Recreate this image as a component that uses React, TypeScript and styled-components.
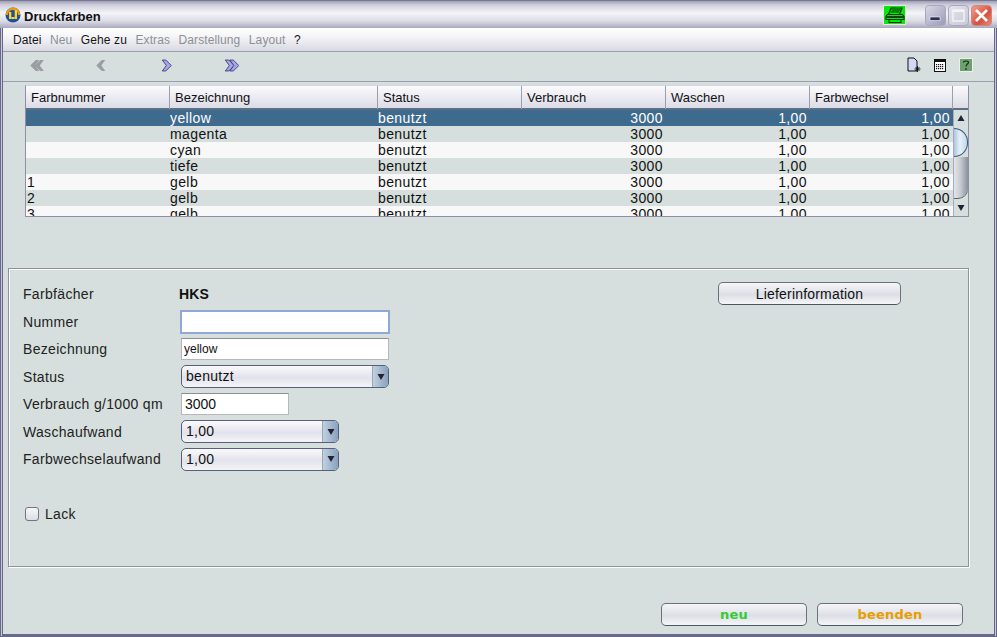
import React from "react";
import styled, { createGlobalStyle } from "styled-components";

const Global = createGlobalStyle`
  html, body { margin: 0; padding: 0; background: #d6dfdd; }
  body { font-family: "Liberation Sans", Arial, sans-serif; color: #111; overflow: hidden; }
  * { box-sizing: border-box; }
`;

const Window = styled.div`
  width: 997px; height: 637px; display: flex; flex-direction: column;
  background: #d6dfdd; overflow: hidden;
`;
const TitleBar = styled.div`
  height: 28px; flex: none; display: flex; align-items: center; padding: 1px 5px 0 5px;
  border-top: 1px solid #77778f;
  background: linear-gradient(#9f9fb6 0, #cfcfdc 4px, #f4f4f8 12px, #dcdce6 20px, #a9a9bf 27px);
`;
const Title = styled.span`
  font: bold 13px "Liberation Sans", Arial, sans-serif; margin: 2px 0 0 3px; color: #111; flex: 1;
`;
const PrintButton = styled.div`
  width: 23px; height: 20px; margin-right: 19px; background: #08e808; border: 1px solid #e8e8e8;
  display: flex; align-items: center; justify-content: center;
`;
const WinButton = styled.div<{ $kind: "min" | "max" | "close" }>`
  width: 21px; height: 21px; border-radius: 4px; margin-left: ${p => (p.$kind === "min" ? 0 : 2)}px;
  display: flex; align-items: center; justify-content: center;
  border: 1px solid ${p => (p.$kind === "close" ? "#c98a80" : "#a8a8bc")};
  background: ${p =>
    p.$kind === "close"
      ? "linear-gradient(135deg,#f0a090,#d8503c 60%,#e88a70)"
      : p.$kind === "min"
      ? "linear-gradient(135deg,#d8d8e6,#9a9ab8)"
      : "linear-gradient(135deg,#e4e4ec,#c8c8d8)"};
`;
const Frame = styled.div`
  flex: 1; min-height: 0; display: flex; flex-direction: column;
  border: 1px solid #68688a; border-width: 0 1px 1px 1px;
  box-shadow: inset 1px 0 0 #c8c8d8, inset -1px 0 0 #c8c8d8, inset 2px 0 0 #68688a, inset -2px 0 0 #68688a, inset 0 -2px 0 #68688a;
  padding: 0 3px 3px 3px;
  margin: 0;
`;
const MenuBar = styled.div`
  height: 24px; flex: none; display: flex; align-items: center; gap: 8.5px; padding: 0 0 0 10px;
  border-bottom: 1px solid #9a9fae; margin: 0 -1px;
  background: linear-gradient(#ffffff, #f4f4f7 40%, #d8d8e2);
`;
const MenuItem = styled.span<{ $off?: boolean }>`
  font-size: 12px; letter-spacing: 0.1px; color: ${p => (p.$off ? "#8c9094" : "#151515")}; white-space: nowrap;
`;
const ToolBar = styled.div`
  height: 30px; flex: none; display: flex; align-items: center; padding: 0 21px 3px 27px;
  border-bottom: 1px solid #9a9fae; margin: 0 -1px;
`;
const NavSlot = styled.div<{ $w: number }>`
  width: ${p => p.$w}px; display: flex;
`;
const ToolSpacer = styled.div`flex: 1;`;
const ToolIcon = styled.div<{ $w: number }>`
  width: ${p => p.$w}px; height: 16px; margin-left: 13px; display: flex; align-items: center; justify-content: center;
`;

const Table = styled.div`
  margin: 3px 0 0 21px; width: 944px; height: 132px; flex: none;
  border: 1px solid #8e8ea6; display: flex; flex-direction: column; overflow: hidden; background: #d6dfdd;
  border-top-color: #d4d4e0;
`;
const HeaderRow = styled.div`
  height: 24px; flex: none; display: grid; grid-template-columns: 144px 208px 144px 144px 144px 143px 1fr;
  border-bottom: 2px solid #5d6f82;
  background: linear-gradient(#fbfbfd, #ebebf2 50%, #dcdce8);
`;
const HeaderCell = styled.div`
  font-size: 13px; line-height: 23px; padding-left: 5px; border-right: 1px solid #9a9fa8;
  &:last-child { border-right: 0; }
`;
const TableBody = styled.div`
  flex: 1; min-height: 0; display: flex;
`;
const Rows = styled.div`
  width: 927px; overflow: hidden;
`;
const Row = styled.div<{ $sel?: boolean; $alt?: boolean }>`
  height: 16px; display: grid; grid-template-columns: 144px 208px 144px 144px 144px 143px;
  background: ${p => (p.$sel ? "#3e6a8e" : p.$alt ? "#d6dfdd" : "#f8f8f8")};
  color: ${p => (p.$sel ? "#fff" : "#111")};
`;
const Cell = styled.div<{ $right?: boolean }>`
  font-size: 14px; line-height: 16px; white-space: nowrap; overflow: hidden; letter-spacing: 0.4px;
  text-align: ${p => (p.$right ? "right" : "left")};
  padding: ${p => (p.$right ? "0 3px 0 0" : "0")};
  &:first-child { padding-left: 1px; }
`;
const ScrollBar = styled.div`
  flex: 1; display: flex; flex-direction: column; border-left: 1px solid #aab; background: #d6dfdd;
`;
const ScrollArrow = styled.div`
  height: 16px; flex: none; display: flex; align-items: center; justify-content: center; background: #d6dfdd;
  &:last-child { margin-top: auto; }
`;
const ScrollThumb = styled.div`
  height: 29px; margin-top: 2px; flex: none; border: 1px solid #3c5a78; border-left: 0;
  border-radius: 0 14px 14px 0; background: linear-gradient(90deg, #a9c6e2, #e8f0f8 45%, #c4d8ec);
`;
const ScrollTrack = styled.div`
  height: 42px; flex: none; border-radius: 0 0 10px 0;
  background: linear-gradient(90deg, #e2e4e8, #c8ccd2 45%, #8b909c);
  border-bottom: 1px solid #5c6270;
`;

const Panel = styled.div`
  margin: 51px 0 0 4px; width: 961px; height: 299px; flex: none;
  border: 1px solid #8f9296; box-shadow: 1px 1px 0 #fff, inset 1px 1px 0 #fff;
  padding: 11px 67px 0 14px; display: flex; justify-content: space-between; align-items: flex-start;
`;
const FormColumn = styled.div`display: flex; flex-direction: column;`;
const FormGrid = styled.div`
  display: grid; grid-template-columns: 158px auto;
  grid-template-rows: 28px 27px 28px 27px 28px 27px 28px; align-items: center; justify-items: start;
`;
const Label = styled.label`font-size: 14px; color: #222; white-space: nowrap; letter-spacing: 0.32px;`;
const Strong = styled.span`font-size: 14px; font-weight: bold; color: #111; margin-left: -2px; letter-spacing: 0.2px;`;
const Input = styled.div<{ $w: number; $focus?: boolean; $small?: boolean }>`
  width: ${p => p.$w}px; height: ${p => (p.$focus ? 24 : 22)}px; background: #fff;
  margin-left: ${p => (p.$focus ? -1 : 0)}px;
  border: ${p => (p.$focus ? "2px solid #8fa8d4" : "1px solid #b4b8bc")};
  border-top-color: ${p => (p.$focus ? "#8fa8d4" : "#8c8f92")};
  font-size: ${p => (p.$small ? 12 : 14)}px; line-height: 20px; padding: 0 0 0 ${p => (p.$small ? 2 : 3)}px; color: #111;
`;
const Select = styled.div<{ $w: number }>`
  width: ${p => p.$w}px; height: 23px; border: 1px solid #56607a; border-radius: 5px; overflow: hidden;
  display: flex; background: linear-gradient(#fafafc, #e2e2ec 55%, #f4f4f8);
`;
const SelectValue = styled.span`
  flex: 1; font-size: 14px; line-height: 21px; padding-left: 4px; color: #111; letter-spacing: 0.3px;
`;
const SelectArrow = styled.span`
  width: 16px; display: flex; align-items: center; justify-content: center;
  border-left: 1px solid #9aa; background: linear-gradient(90deg, #c0d0e2, #88a2bc);
`;
const CheckRow = styled.div`
  margin: 34px 0 0 2px; display: flex; align-items: center; gap: 6px; height: 14px;
`;
const CheckBox = styled.span`
  width: 14px; height: 14px; border: 1px solid #70767e; border-radius: 3px;
  background: linear-gradient(#f8f8fa, #dcdce6);
`;
const PushButton = styled.button`
  height: 23px; border: 1px solid #6c7078; border-radius: 5px; padding: 0; font-family: inherit;
  background: linear-gradient(#f6f6f9, #dcdfe6 55%, #f4f5f8); border-bottom-color: #50555e;
`;
const InfoButton = styled(PushButton)`
  width: 183px; font-size: 14px; color: #111; margin-top: 2px; letter-spacing: 0.2px;
`;
const Footer = styled.div`
  margin-top: 36px; display: flex; justify-content: flex-end; gap: 10px; padding-right: 30px;
`;
const ActionButton = styled(PushButton)<{ $color: string }>`
  width: 146px; font: bold 13px "DejaVu Sans", sans-serif; color: ${p => p.$color}; letter-spacing: 0.2px;
`;

const Chevron = ({ dir, n, off }: { dir: "l" | "r"; n: number; off?: boolean }) => {
  const fill = off ? "#9a9ea2" : "#a6a6ea";
  const stroke = off ? "#8c9094" : "#30306a";
  const w = n === 2 ? 14 : 10;
  const shape = (x: number) =>
    dir === "r"
      ? `M${x} 1 L${x + 3.5} 1 L${x + 9} 6.5 L${x + 3.5} 12 L${x} 12 L${x + 4} 6.5 Z`
      : `M${x + 9} 1 L${x + 5.5} 1 L${x} 6.5 L${x + 5.5} 12 L${x + 9} 12 L${x + 5} 6.5 Z`;
  return (
    <svg width={w} height={13} viewBox={`0 0 ${w} 13`}>
      {Array.from({ length: n }).map((_, i) => (
        <path key={i} d={shape(i * 4.5 + 0.3)} fill={fill} stroke={off ? "none" : stroke} strokeWidth={0.8} />
      ))}
    </svg>
  );
};

const Logo = () => (
  <svg width="16" height="16" viewBox="0 0 16 16">
    <circle cx="8" cy="8" r="7.5" fill="#1d4fa8" />
    <path d="M.6 8a7.4 7.4 0 0 1 14.8 0h-2.4a5 5 0 0 0-10 0z" fill="#e89a10" />
    <rect x="4" y="5" width="2.3" height="7" fill="#f8d820" />
    <rect x="9.7" y="3" width="2.3" height="9" fill="#f8d820" />
    <rect x="6.3" y="10" width="3.4" height="2" fill="#f8d820" />
  </svg>
);
const PrinterIcon = () => (
  <svg width="20" height="17" viewBox="0 0 20 17" fill="none" stroke="#062406" strokeWidth="1.1">
    <path d="M6 1h11l-2.5 6.5H3.5z" />
    <path d="M6.5 3h9M5.5 5h9" />
    <path d="M2.5 7.5h15l1.5 2v3H1v-3z" />
    <path d="M1.5 10h17" strokeWidth="1.6" />
    <path d="M4 12.5h12v3H4z" />
  </svg>
);
const WinGlyph = ({ kind }: { kind: "min" | "max" | "close" }) =>
  kind === "min" ? (
    <svg width="13" height="13" viewBox="0 0 13 13"><rect x="1" y="8" width="10" height="3.5" fill="#2c2c58" stroke="#fff" strokeWidth=".6" /></svg>
  ) : kind === "max" ? (
    <svg width="13" height="13" viewBox="0 0 13 13"><rect x="1" y="1" width="11" height="11" fill="none" stroke="#f4f4f8" strokeWidth="1.4" /><rect x="1" y="1" width="11" height="2" fill="#f4f4f8" /></svg>
  ) : (
    <svg width="15" height="15" viewBox="0 0 15 15"><path d="M2 2l11 11M13 2L2 13" stroke="#fff" strokeWidth="2.6" /></svg>
  );
const NewIcon = () => (
  <svg width="14" height="16" viewBox="0 0 14 16">
    <path d="M1 1h6l3 3v10H1z" fill="#d4d8f4" stroke="#111" />
    <path d="M10.5 9v6M7.5 12h6M8.5 10l4 4M12.5 10l-4 4" stroke="#111" strokeWidth=".9" />
  </svg>
);
const GridIcon = () => (
  <svg width="12" height="13" viewBox="0 0 12 13">
    <rect x=".5" y=".5" width="11" height="12" fill="#fff" stroke="#111" />
    <rect x=".5" y=".5" width="11" height="2.5" fill="#111" />
    {[2, 4, 6, 8].flatMap(x => [5, 7, 9].map(y => <rect key={`${x}${y}`} x={x} y={y} width="1.2" height="1.2" fill="#111" />))}
  </svg>
);
const HelpIcon = () => (
  <svg width="14" height="14" viewBox="0 0 14 14">
    <rect x=".5" y=".5" width="13" height="13" fill="#6fa06f" stroke="#e8f0e8" />
    <path d="M4.5 4.5c0-2 5-2 5 0 0 1.6-2.5 1.6-2.5 4M7 10v2" fill="none" stroke="#123012" strokeWidth="1.2" />
  </svg>
);
const Tri = ({ up, size = 8 }: { up?: boolean; size?: number }) => (
  <svg width={size} height={size} viewBox="0 0 8 8">
    <path d={up ? "M4 1l3.5 6h-7z" : "M4 7L.5 1h7z"} fill="#223" />
  </svg>
);

const rows = [
  ["", "yellow"], ["", "magenta"], ["", "cyan"], ["", "tiefe"], ["1", "gelb"], ["2", "gelb"], ["3", "gelb"],
];
const heads = ["Farbnummer", "Bezeichnung", "Status", "Verbrauch", "Waschen", "Farbwechsel", ""];
const menu: [string, boolean][] = [
  ["Datei", false], ["Neu", true], ["Gehe zu", false], ["Extras", true], ["Darstellung", true], ["Layout", true], ["?", false],
];
const wins: ("min" | "max" | "close")[] = ["min", "max", "close"];

export default function App() {
  return (
    <Window>
      <Global />
      <TitleBar>
        <Logo />
        <Title>Druckfarben</Title>
        <PrintButton><PrinterIcon /></PrintButton>
        {wins.map(k => <WinButton key={k} $kind={k}><WinGlyph kind={k} /></WinButton>)}
      </TitleBar>
      <Frame>
        <MenuBar>
          {menu.map(([t, off]) => <MenuItem key={t} $off={off}>{t}</MenuItem>)}
        </MenuBar>
        <ToolBar>
          <NavSlot $w={66}><Chevron dir="l" n={2} off /></NavSlot>
          <NavSlot $w={66}><Chevron dir="l" n={1} off /></NavSlot>
          <NavSlot $w={63}><Chevron dir="r" n={1} /></NavSlot>
          <NavSlot $w={20}><Chevron dir="r" n={2} /></NavSlot>
          <ToolSpacer />
          <ToolIcon $w={14}><NewIcon /></ToolIcon>
          <ToolIcon $w={12}><GridIcon /></ToolIcon>
          <ToolIcon $w={14}><HelpIcon /></ToolIcon>
        </ToolBar>
        <Table>
          <HeaderRow>
            {heads.map((h, i) => <HeaderCell key={i}>{h}</HeaderCell>)}
          </HeaderRow>
          <TableBody>
            <Rows>
              {rows.map(([n, b], i) => (
                <Row key={i} $sel={i === 0} $alt={i % 2 === 1}>
                  <Cell>{n}</Cell>
                  <Cell>{b}</Cell>
                  <Cell>benutzt</Cell>
                  <Cell $right>3000</Cell>
                  <Cell $right>1,00</Cell>
                  <Cell $right>1,00</Cell>
                </Row>
              ))}
            </Rows>
            <ScrollBar>
              <ScrollArrow><Tri up /></ScrollArrow>
              <ScrollThumb />
              <ScrollTrack />
              <ScrollArrow><Tri /></ScrollArrow>
            </ScrollBar>
          </TableBody>
        </Table>
        <Panel>
          <FormColumn>
            <FormGrid>
              <Label>Farbfächer</Label><Strong>HKS</Strong>
              <Label>Nummer</Label><Input $w={210} $focus />
              <Label>Bezeichnung</Label><Input $w={208} $small>yellow</Input>
              <Label>Status</Label>
              <Select $w={208}><SelectValue>benutzt</SelectValue><SelectArrow><Tri /></SelectArrow></Select>
              <Label>Verbrauch g/1000 qm</Label><Input $w={108}>3000</Input>
              <Label>Waschaufwand</Label>
              <Select $w={158}><SelectValue>1,00</SelectValue><SelectArrow><Tri /></SelectArrow></Select>
              <Label>Farbwechselaufwand</Label>
              <Select $w={158}><SelectValue>1,00</SelectValue><SelectArrow><Tri /></SelectArrow></Select>
            </FormGrid>
            <CheckRow><CheckBox /><Label>Lack</Label></CheckRow>
          </FormColumn>
          <InfoButton>Lieferinformation</InfoButton>
        </Panel>
        <Footer>
          <ActionButton $color="#33cc33">neu</ActionButton>
          <ActionButton $color="#e89c00">beenden</ActionButton>
        </Footer>
      </Frame>
    </Window>
  );
}
